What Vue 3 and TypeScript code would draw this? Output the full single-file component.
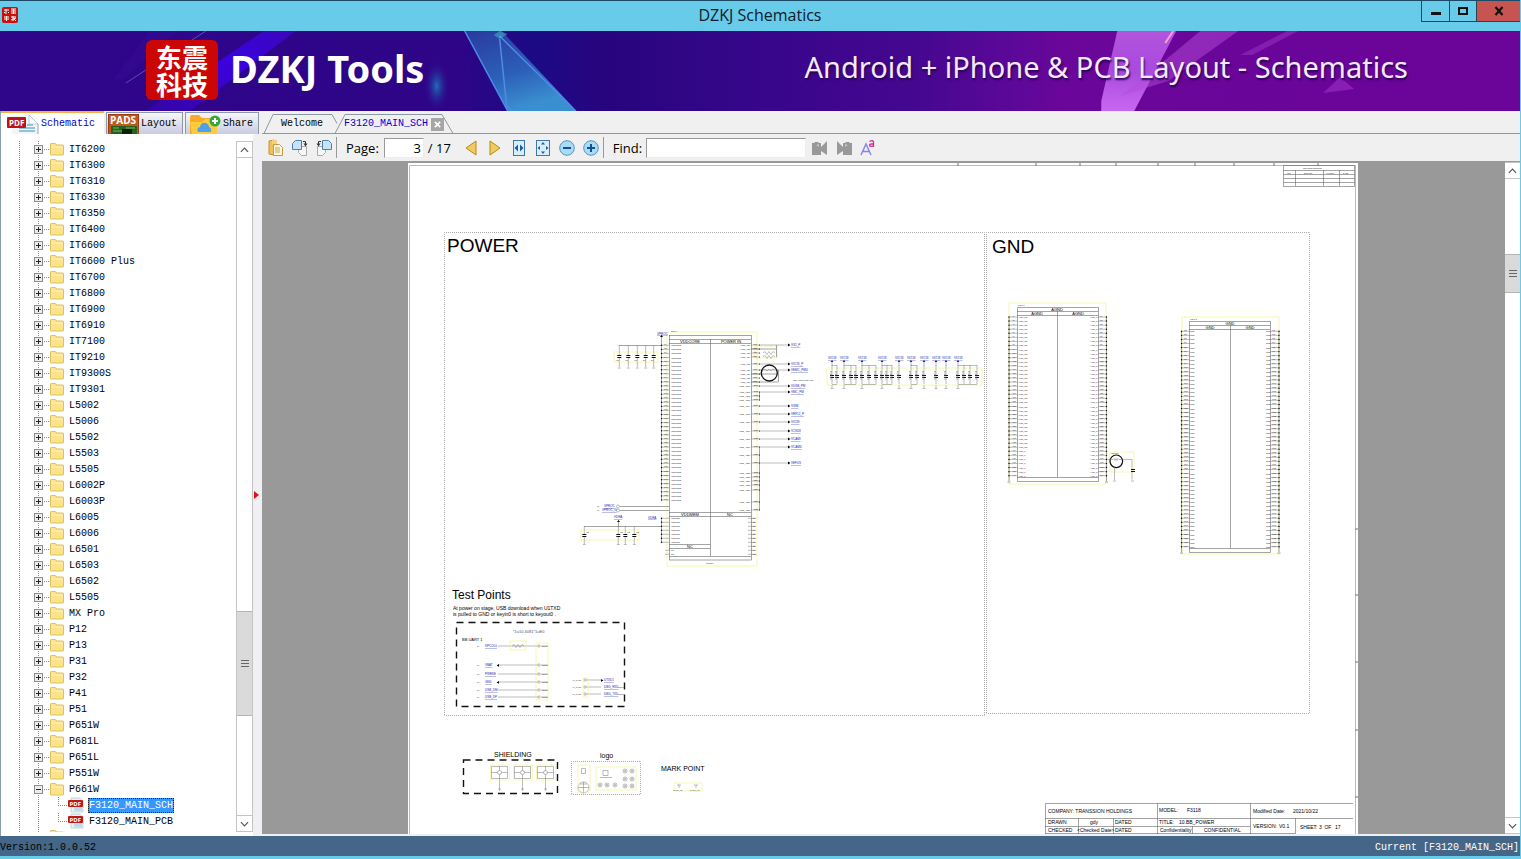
<script setup lang="ts">
import { ref } from 'vue'

interface Pin { y: number; n: string }
interface Line { x1: number; y1: number; x2: number; y2: number }

const folders: string[] = [
  'IT6200', 'IT6300', 'IT6310', 'IT6330', 'IT6350', 'IT6400', 'IT6600', 'IT6600 Plus', 'IT6700',
  'IT6800', 'IT6900', 'IT6910', 'IT7100', 'IT9210', 'IT9300S', 'IT9301', 'L5002', 'L5006', 'L5502',
  'L5503', 'L5505', 'L6002P', 'L6003P', 'L6005', 'L6006', 'L6501', 'L6503', 'L6502', 'L5505',
  'MX Pro', 'P12', 'P13', 'P31', 'P32', 'P41', 'P51', 'P651W', 'P681L', 'P651L', 'P551W', 'P661W',
]
const files: string[] = ['F3120_MAIN_SCH', 'F3120_MAIN_PCB']
const selected = ref('F3120_MAIN_SCH')
const page = ref('3')
const query = ref('')

const series = (from: number, to: number, count: number): number[] =>
  Array.from({ length: count }, (_, i) => from + ((to - from) * i) / (count - 1))
const named = (ys: number[], prefix: string): Pin[] => ys.map((y, i) => ({ y, n: prefix + (i + 1) }))

const corePins = named(series(345.3, 500, 39), 'K')
const memPins = named(series(518.3, 542.3, 7), 'M')
const powerPins = named(
  [345, 349, 353, 357, 364, 370, 374, 378, 382, 386, 392, 396, 400, 406, 414, 422, 431, 439, 447, 455,
    463, 473, 477, 481, 485, 490, 502, 510], 'AB')
const ncPins = named(series(518.3, 554.3, 10), 'U')
const outputs: Pin[] = [
  { y: 345, n: 'VS2_P' }, { y: 364, n: 'VIO18_P' }, { y: 370, n: 'VEMC_PMU' }, { y: 386, n: 'VUSB_PM' },
  { y: 392, n: 'VMC_PM' }, { y: 406, n: 'VSIM' }, { y: 414, n: 'VRF12_P' }, { y: 422, n: 'VIO28' },
  { y: 431, n: 'VCN18' }, { y: 439, n: 'VCAMI' }, { y: 447, n: 'VCAMD' }, { y: 463, n: 'VEFUS' },
]
const buses: Line[] = [
  { x1: 661.5, y1: 335, x2: 661.5, y2: 500 }, { x1: 661.5, y1: 518, x2: 661.5, y2: 543 },
  { x1: 619, y1: 345.5, x2: 662, y2: 345.5 }, { x1: 584, y1: 526.5, x2: 662, y2: 526.5 },
  { x1: 620, y1: 506.5, x2: 669, y2: 506.5 }, { x1: 620, y1: 510.5, x2: 669, y2: 510.5 },
  { x1: 759.5, y1: 447, x2: 759.5, y2: 510 }, { x1: 759.5, y1: 392, x2: 759.5, y2: 400 },
  { x1: 776.5, y1: 345, x2: 776.5, y2: 357 }, { x1: 778.5, y1: 370, x2: 778.5, y2: 382 },
  { x1: 751, y1: 349, x2: 776, y2: 349 }, { x1: 751, y1: 382, x2: 778, y2: 382 },
  { x1: 751, y1: 374, x2: 778, y2: 374 }, { x1: 618.5, y1: 521, x2: 618.5, y2: 527 },
]
const capsTop = [619.3, 628.3, 637.3, 645.7, 653.7]
const capsLow = [584.3, 618.3, 625.3, 634.3]
const bankLabels = [832, 844, 862, 882, 899, 911, 924, 936, 946, 958]
const bankCaps = [832, 837, 844, 851, 856, 862, 869, 876, 882, 887, 892, 899, 911, 917, 924, 936, 946, 958, 964, 970, 977]
const bankRails: [number, number][] = [[832, 837], [844, 856], [862, 876], [882, 892], [911, 917], [958, 977]]
const agnd = series(317, 475.7, 40)
const gnd = series(331.3, 546.7, 54)
const topTicks = [958, 1036, 1080, 1116, 1158, 1195, 1234, 1274, 1318]
const sideTicks = [529, 595, 662, 730, 797]
const leftNets: Pin[] = [
  { y: 646, n: 'KPCOL0' }, { y: 665, n: 'VBAT' }, { y: 674, n: 'PWRKE' },
  { y: 682, n: 'GND' }, { y: 690, n: 'USB_DM' }, { y: 697, n: 'USB_DP' },
]
const rightNets: Pin[] = [{ y: 680, n: 'UTXD1' }, { y: 687, n: 'DBG_RXD' }, { y: 694, n: 'DBG_TXD' }]
const shields = [499.5, 522.5, 545.5]
const dots: [number, number][] = [
  [600, 785], [607, 785], [615, 785], [625, 771], [632, 771], [625, 779], [632, 779], [625, 786], [632, 786],
]
</script>

<template>
  <div class="window">
    <header class="titlebar">
      <svg class="app-icon" viewBox="0 0 16 16" aria-hidden="true">
        <rect width="16" height="16" rx="2" fill="#c8100c" />
        <path d="M2 3h5M4 2v5M2 6l1-1M6 5l1 1M9 2h5M9 4h5M9 6h5M11.500 2v5M2 10h5M4.500 9v5M2 12h5M9 10h5M11 9v5M9 13l5-2M12 12l2 2" stroke="#fff" stroke-width="1" fill="none" />
      </svg>
      <h1>DZKJ Schematics</h1>
      <div class="win-buttons">
        <button class="wb min" aria-label="Minimize"><i></i></button>
        <button class="wb max" aria-label="Maximize"><i></i></button>
        <button class="wb close" aria-label="Close">
          <svg viewBox="0 0 10 10" width="10" height="10"><path d="M1.500 1l7 8M8.500 1l-7 8" stroke="#111" stroke-width="2.200" /></svg>
        </button>
      </div>
    </header>

    <section class="banner">
      <svg class="banner-art" viewBox="0 0 1521 80" preserveAspectRatio="none" aria-hidden="true">
        <defs>
          <linearGradient id="sky" x1="0" x2="1">
            <stop offset="0" stop-color="#2f058a" /><stop offset=".3" stop-color="#2e0587" />
            <stop offset=".35" stop-color="#1c0a85" /><stop offset=".4" stop-color="#28057f" />
            <stop offset=".5" stop-color="#37068a" /><stop offset=".6" stop-color="#45078f" />
            <stop offset=".67" stop-color="#5d0899" /><stop offset=".7" stop-color="#6a0699" />
            <stop offset="1" stop-color="#6b0499" />
          </linearGradient>
          <linearGradient id="beam" x1="1" y1="0" x2="0" y2="1">
            <stop offset="0" stop-color="#3d06b8" /><stop offset=".4" stop-color="#3a02e0" /><stop offset="1" stop-color="#3405a0" />
          </linearGradient>
          <linearGradient id="crystal" x1="0" y1="0" x2=".4" y2="1">
            <stop offset="0" stop-color="#2a3aa0" /><stop offset=".6" stop-color="#2c5fb8" /><stop offset="1" stop-color="#3a8fd0" />
          </linearGradient>
          <linearGradient id="pink" x1="0" y1="0" x2="0" y2="1">
            <stop offset="0" stop-color="#b354dc" /><stop offset=".5" stop-color="#a94ae0" /><stop offset="1" stop-color="#c868f0" />
          </linearGradient>
          <radialGradient id="glow"><stop offset="0" stop-color="#1c6fb8" /><stop offset="1" stop-color="#2f058a" stop-opacity="0" /></radialGradient>
        </defs>
        <rect width="1521" height="80" fill="url(#sky)" />
        <path d="M264 0h32L190 80h-45z" fill="url(#beam)" />
        <path d="M150 0h28L124 48h-10z" fill="#3a16a0" opacity=".25" />
        <path d="M206 0l-80 52" stroke="#5450b8" stroke-width="1" />
        <path d="M465 0h37l75 80H508z" fill="url(#crystal)" />
        <path d="M465 0l43 80h-30z" fill="#280a86" opacity=".35" />
        <path d="M465 0l43 80M500 5l76 75M500 8l7 67 6 5" stroke="#4f8be8" stroke-width="1.500" fill="none" />
        <path d="M500 0l-6 4 6 4 8-5z" fill="#4ce0d8" opacity=".4" />
        <ellipse cx="437" cy="55" rx="13" ry="26" fill="url(#glow)" />
        <path d="M1118 0h59l-42 80h-33V70z" fill="url(#pink)" />
        <path d="M1201 0h38l-70 50-48 15 50-40z" fill="#b34bd8" opacity=".5" />
        <path d="M1288 0h11l-46 24h-12z" fill="#b34bd8" opacity=".35" />
        <path d="M1341 46l14 12-31 4z" fill="#a035c8" opacity=".55" />
        <path d="M1174 0l-8 12" stroke="#ff9cd8" stroke-width="2" />
      </svg>
      <div class="seal">东震<br />科技</div>
      <strong>DZKJ Tools</strong>
      <p>Android + iPhone &amp; PCB Layout - Schematics</p>
    </section>

    <main>
      <aside>
        <nav class="side-tabs">
          <button class="tab active">
            <svg width="32" height="20" viewBox="0 0 32 20" aria-hidden="true">
              <path d="M5 1h18l8 9v10H5z" fill="#f2f6fa" /><path d="M22 1l9 9v10" stroke="#8fa6b8" fill="none" />
              <path d="M22 1v9h9z" fill="#fff" stroke="#a9bac8" stroke-width=".700" />
              <path d="M12 14h16M12 17h16M20 11h6" stroke="#93c4dc" stroke-width="2" />
              <rect y="3" width="19" height="11" rx="1" fill="#c01414" />
              <text x="2" y="12" class="pdf-mark" font-size="8">PDF</text>
            </svg>
            Schematic
          </button>
          <button class="tab layout">
            <svg width="31" height="20" viewBox="0 0 31 20" aria-hidden="true">
              <rect x=".500" y=".500" width="30" height="20" fill="#c4581c" stroke="#a03c10" />
              <rect x="3" y="12" width="26" height="8" fill="#275f1e" />
              <path d="M5 14h6M5 17h10M18 14h9" stroke="#6fc24a" /><rect x="14" y="15" width="10" height="5" fill="#111c10" />
              <text x="2" y="10" class="pdf-mark" font-size="10">PADS</text>
            </svg>
            Layout
          </button>
          <button class="tab share">
            <svg width="32" height="20" viewBox="0 0 32 20" aria-hidden="true">
              <path d="M1 3q0-2 2-2h7l3 3h13q2 0 2 2v14H1z" fill="#f7a928" /><path d="M1 8h12l3-3h12v15H3z" fill="#ffcb3d" />
              <path d="M9 18q-2-4 2-5 1-5 6-4 3 1 3 4 3 1 2 5z" fill="#4aa3e8" />
              <circle cx="26" cy="7" r="5.500" fill="#35a83c" /><path d="M26 4v6M23 7h6" stroke="#fff" stroke-width="2" />
            </svg>
            Share
          </button>
        </nav>
        <div class="tree-panel">
          <ul class="tree">
            <li v-for="(name, i) in folders" :key="i">
              <button class="node">
                <svg width="31" height="16" viewBox="0 0 31 16" aria-hidden="true">
                  <path d="M10 8.500h6" stroke="#888" stroke-dasharray="1 1" />
                  <rect x=".500" y="4.500" width="8" height="8" fill="#ececec" stroke="#8c8c8c" />
                  <path d="M2 8.500h5" stroke="#222" /><path v-if="i < folders.length - 1" d="M4.500 6v5" stroke="#222" />
                  <path d="M16.500 3q0-.500.500-.500h4l2 1.500h6q.500 0 .500.500v9q0 .500-.500.500h-12q-.500 0-.500-.500z" fill="#fbe58a" stroke="#e3bf62" />
                  <path d="M18 6h11" stroke="#fff3b4" />
                </svg>
                <b>{{ name }}</b>
              </button>
            </li>
            <li v-for="file in files" :key="file" class="leaf">
              <button class="node" :class="{ chosen: file === selected }" @click="selected = file">
                <svg width="26" height="16" viewBox="0 0 26 16" aria-hidden="true">
                  <path d="M0 8.500h10M.500 0v8" stroke="#888" stroke-dasharray="1 1" fill="none" />
                  <path d="M13 1h9l3 3v11H13z" fill="#eaf3f8" stroke="#a9c3d0" stroke-width=".700" />
                  <path d="M16 11h8M16 13h8" stroke="#8fc4de" />
                  <rect x="10" y="3" width="15" height="7" rx="1" fill="#c01818" /><text x="11.500" y="9" class="pdf-mark" font-size="6">PDF</text>
                </svg>
                <span>{{ file }}</span>
              </button>
            </li>
            <li>
              <svg width="31" height="16" viewBox="0 0 31 16" aria-hidden="true">
                <path d="M16.500 2q0-.500.500-.500h4l2 1.500h6q.500 0 .500.500v9H16.500z" fill="#fbe58a" stroke="#e3bf62" />
              </svg>
            </li>
          </ul>
          <div class="scrollbar">
            <button aria-label="Scroll tree up"><svg viewBox="0 0 10 6" width="9" height="6"><path d="M1 5l4-4 4 4" /></svg></button>
            <i class="tree-before"></i><i class="thumb tree-thumb"></i><i class="tree-after"></i>
            <button aria-label="Scroll tree down"><svg viewBox="0 0 10 6" width="9" height="6"><path d="M1 1l4 4 4-4" /></svg></button>
          </div>
        </div>
      </aside>

      <div class="splitter"><svg width="5" height="8" viewBox="0 0 5 8"><path d="M0 0l5 4-5 4z" fill="#e01010" /></svg></div>

      <section class="workspace">
        <nav class="doc-tabs">
          <svg class="tab-lines" width="200" height="23" viewBox="0 0 200 23" aria-hidden="true">
            <path d="M0 22.500h2L11 3.500h59l5 9M73 22.500l10-19h97l11 19" fill="none" stroke="#8b98a5" />
          </svg>
          <button>Welcome</button>
          <button class="current">F3120_MAIN_SCH</button>
          <button class="tab-close" aria-label="Close tab"><svg viewBox="0 0 8 8" width="7" height="7"><path d="M1 1l6 6M7 1l-6 6" stroke="#fff" stroke-width="2" /></svg></button>
        </nav>

        <div class="toolbar">
          <button class="tool" aria-label="Open">
            <svg width="16" height="18" viewBox="0 0 16 18"><path d="M1 2l5-1v15l-5-1z" fill="#f0c060" stroke="#c89030" /><path d="M4 1h5v4H4z" fill="#f5d080" /><path d="M5.500 5.500h6l3 3v8h-9z" fill="#fff8e0" stroke="#c79c45" /><path d="M7 9h5M7 11h5M7 13h5" stroke="#cda14c" /></svg>
          </button>
          <button class="tool" aria-label="Rotate right">
            <svg width="18" height="18" viewBox="0 0 18 18"><path d="M8.500 7.500h7v9h-5l-3-3v-3" fill="#f6f6f6" stroke="#aaa" /><path d="M1.500 4.500l3-3h6v9h-9z" fill="#c8e2f8" stroke="#4f80b0" /><path d="M12 2.500h2.500v3" fill="none" stroke="#333" /><path d="M12.500 4.500h4l-2 3z" fill="#333" /></svg>
          </button>
          <button class="tool" aria-label="Rotate left">
            <svg width="18" height="18" viewBox="0 0 18 18"><path d="M9.500 7.500h-7v9h5l3-3v-3" fill="#f6f6f6" stroke="#aaa" /><path d="M7.500 1.500h6l3 3v6h-9z" fill="#c8e2f8" stroke="#4f80b0" /><path d="M6 2.500H3.500v3" fill="none" stroke="#333" /><path d="M1.500 4.500h4l-2 3z" fill="#333" /></svg>
          </button>
          <i class="rule"></i>
          <label for="page">Page:</label>
          <input id="page" v-model="page" class="page-box" type="text" />
          <span class="total">/ 17</span>
          <button class="tool" aria-label="Previous page"><svg width="14" height="16" viewBox="0 0 14 16"><path d="M12 1v14L2 8z" fill="#f0cc60" stroke="#b88718" stroke-linejoin="round" /></svg></button>
          <button class="tool" aria-label="Next page"><svg width="14" height="16" viewBox="0 0 14 16"><path d="M2 1v14l10-7z" fill="#f0cc60" stroke="#b88718" stroke-linejoin="round" /></svg></button>
          <button class="tool" aria-label="Fit width"><svg width="14" height="16" viewBox="0 0 14 16"><rect x="1.500" y=".500" width="11" height="15" fill="#d9edfb" stroke="#3d77b5" /><path d="M6 4.500v7L2.500 8zM8 4.500v7L11.500 8z" fill="#1d5ca8" /></svg></button>
          <button class="tool" aria-label="Fit page"><svg width="14" height="16" viewBox="0 0 14 16"><rect x=".500" y=".500" width="13" height="15" fill="#d9edfb" stroke="#3d77b5" /><path d="M5 4.500L7 2l2 2.500zM5 11.500L7 14l2-2.500zM4 6v4L1.500 8zM10 6v4l2.500-2z" fill="#1d5ca8" /></svg></button>
          <button class="tool" aria-label="Zoom out"><svg width="16" height="16" viewBox="0 0 16 16"><circle cx="8" cy="8" r="7.300" fill="#a6dcf7" stroke="#5d91bb" /><path d="M4 8h8" stroke="#14508c" stroke-width="2" /></svg></button>
          <button class="tool" aria-label="Zoom in"><svg width="16" height="16" viewBox="0 0 16 16"><circle cx="8" cy="8" r="7.300" fill="#a6dcf7" stroke="#5d91bb" /><path d="M4 8h8M8 4v8" stroke="#14508c" stroke-width="2" /></svg></button>
          <i class="rule"></i>
          <label for="find">Find:</label>
          <input id="find" v-model="query" class="find-box" type="text" />
          <button class="tool" aria-label="Find previous"><svg width="16" height="16" viewBox="0 0 16 16"><path d="M0 3h2l1-1h3l1 1h2v4l6-6v14l-6-4v4H0z" fill="#999" /><path d="M4 5l3-1v3z" fill="#c4c4c4" /></svg></button>
          <button class="tool" aria-label="Find next"><svg width="16" height="16" viewBox="0 0 16 16"><path d="M16 3h-2l-1-1h-3L9 3H7v4L1 1v14l6-4v4h9z" fill="#999" /><path d="M12 5L9 4v3z" fill="#c4c4c4" /></svg></button>
          <button class="tool" aria-label="Match case"><svg width="16" height="18" viewBox="0 0 16 18"><path d="M1 16L6 5l5 11M3 12.500h6" fill="none" stroke="#8a84e6" stroke-width="1.500" /><path d="M9.500 2.500q4-2 4 1V8M13.500 5h-2q-2 0-2 1.200t2 1.200 2-1.400" fill="none" stroke="#cf2f94" stroke-width="1.300" /></svg></button>
        </div>

        <div class="viewer">
          <div class="canvas">
            <svg class="sheet" viewBox="408 163 950 671" width="950" height="671" role="img" aria-label="Schematic page 3">
              <rect x="408" y="163" width="950" height="671" fill="#fff" />
              <path d="M409.500 834V165.500H1355.500V834" fill="none" stroke="#bbb" stroke-width="1" />
              <path v-for="x in topTicks" :key="x" :d="`M${x} 163v3`" stroke="#777" />
              <path v-for="y in sideTicks" :key="y" :d="`M1355 ${y}h3`" stroke="#777" />

              <!-- revision table -->
              <g class="thin">
                <path d="M1283.500 165.500h71v21h-71zM1283.500 170.500h71M1283.500 174.500h71M1283.500 178.500h71M1283.500 182.500h71M1295.500 170v16M1323.500 170v16M1339.500 170v16" />
              </g>
              <g class="micro"><text x="1303" y="169">REVISION RECORD</text><text x="1287" y="173.500">LTR</text><text x="1304" y="173.500">ECO NO:</text><text x="1326" y="173.500">APPROV</text><text x="1343" y="173.500">DATE:</text></g>

              <!-- frames -->
              <g fill="none" stroke="#aaa" stroke-width="1" stroke-dasharray="1 1" stroke-dashoffset=".500">
                <path d="M444.500 232.500h540M444.500 715.500h540M986.500 232.500h323M986.500 713.500h323M571.500 761.500h69M571.500 794.500h69" />
                <path d="M444.500 232.500v483M984.500 232.500v483M986.500 232.500v481M1309.500 232.500v481M571.500 761.500v33M640.500 761.500v33" />
              </g>
              <g fill="none" stroke="#111" stroke-width="1.400" stroke-dasharray="7 5">
                <rect x="456.500" y="622.500" width="168" height="84" /><rect x="463.500" y="760" width="94" height="33.500" />
              </g>
              <text x="447" y="252" class="heading">POWER</text>
              <text x="992" y="253" class="heading">GND</text>
              <text x="452" y="599" font-size="12">Test Points</text>
              <text x="453" y="610" class="note">At power on stage, USB download when U1TXD</text>
              <text x="453" y="616" class="note">is pulled to GND or keyin0 is short to keyout0 .</text>
              <text x="494" y="757" font-size="7">SHIELDING</text>
              <text x="600" y="758" font-size="7">logo</text>
              <text x="661" y="771" font-size="7">MARK POINT</text>

              <!-- highlighted component bounds -->
              <g class="bounds">
                <rect x="667" y="332" width="90" height="234" /><rect x="614" y="352" width="44" height="10" />
                <rect x="581" y="530" width="58" height="10" /><rect x="827" y="368" width="155" height="17" />
                <rect x="1009" y="303" width="97" height="181" /><rect x="1182" y="317" width="97" height="237" />
                <rect x="755" y="346" width="22" height="12" /><rect x="1110" y="452" width="24" height="20" />
              </g>

              <!-- main chip -->
              <g class="thin">
                <rect x="669.500" y="335.500" width="82" height="224.500" />
                <path d="M669 339.500h82M669 343.500h82M710.500 339v217M669 512.500h82M669 516.500h82M669 544.500h41M669 548.500h41M669 556.500h82" />
                <path v-for="(b, i) in buses" :key="i" :d="`M${b.x1} ${b.y1}L${b.x2} ${b.y2}`" />
              </g>
              <g v-for="p in corePins" :key="p.n"><path :d="`M661.5 ${p.y}h8`" class="wire" /><circle cx="661.500" :cy="p.y" r=".700" /><text x="671" :y="p.y + 1" class="micro">VDDCORE</text><text x="664" :y="p.y" class="micro">{{ p.n }}</text></g>
              <g v-for="p in memPins" :key="p.n"><path :d="`M661.5 ${p.y}h8`" class="wire" /><circle cx="661.500" :cy="p.y" r=".700" /><text x="671" :y="p.y + 1" class="micro">VDDMEM</text></g>
              <g v-for="p in powerPins" :key="p.n"><path :d="`M751.5 ${p.y}h8`" class="wire" /><circle cx="759.500" :cy="p.y" r=".500" /><text x="750" :y="p.y + 1" class="micro end">AVDD_{{ p.n }}</text><text x="753" :y="p.y" class="micro">{{ p.n }}</text></g>
              <g v-for="p in ncPins" :key="p.n"><path :d="`M748 ${p.y}h8`" class="wire" /><text x="752.500" :y="p.y + 1" class="micro">{{ p.n }}</text></g>
              <g v-for="y in [550.3, 554.3]" :key="y"><path :d="`M665 ${y}h5`" class="wire" /><text x="671" :y="y + 1" class="micro">NC</text></g>
              <g v-for="p in outputs" :key="p.n"><path :d="`M759 ${p.y}h29`" class="wire" /><path :d="`M788 ${p.y - 1.4}l2.400 1.400-2.400 1.400z`" /><text x="791" :y="p.y + 1" class="net">{{ p.n }}</text></g>
              <g class="label"><text x="690" y="343">VDDCORE</text><text x="731" y="343">POWER IN</text><text x="690" y="515.500">VDDMEM</text><text x="730" y="515.500">NC</text><text x="690" y="548">NC</text></g>
              <path d="M763 353l2-1.500 2 3 2-3 2 3 2-3 2 1.500M763 357l2-1.500 2 3 2-3 2 3 2-3 2 1.500" class="wire" />
              <circle cx="769.300" cy="373" r="8" fill="none" stroke="#111" stroke-width="1.300" />
              <path d="M763 370l2-1 2 2 2-2 2 2 2-2 2 1" class="wire" />
              <g class="net"><text x="657" y="334.500">VPROC</text><text x="604" y="507">VPROC</text><text x="602" y="511">VPROC_G</text><text x="614" y="518">VDRA</text><text x="648" y="518.500">VDRA</text></g>
              <path d="M660 337l1.500-2 1.500 2zM617 522l1.500-2 1.500 2z" />
              <g class="micro"><text x="671" y="332">U101-A</text><text x="706" y="564">MT6739</text><text x="597" y="507">[3]</text><text x="597" y="511">[3]</text><text x="793" y="381">Note: close to BGA ball</text></g>
              <circle cx="618" cy="506.500" r="1.500" class="wire" /><circle cx="618" cy="510.500" r="1.500" class="wire" />

              <!-- decoupling capacitors -->
              <g v-for="x in capsTop" :key="x"><path :d="`M${x} 345v10M${x} 358v9M${x - 1.5} 368h3`" class="wire" /><path :d="`M${x - 2} 355.500h4M${x - 2} 357.500h4`" class="plate" /><text :x="x - 3" y="361" class="micro">C1</text></g>
              <g v-for="x in capsLow" :key="x"><path :d="`M${x} 526v8M${x} 537v7M${x - 1.5} 544.500h3`" class="wire" /><path :d="`M${x - 2} 534.500h4M${x - 2} 536.500h4`" class="plate" /><text :x="x + 2" y="533" class="micro">C2</text></g>
              <g v-for="x in bankLabels" :key="x"><text :x="x - 4" y="359" class="net">VIO18</text><path :d="`M${x - 1.3} 362l1.300-2 1.300 2z`" /><path :d="`M${x} 361v5M${x} 385v3M${x - 1.5} 388.500h3`" class="wire" /></g>
              <path v-for="r in bankRails" :key="r[0]" :d="`M${r[0]} 365.500H${r[1]}M${r[0]} 384.500H${r[1]}`" class="wire" />
              <g v-for="x in bankCaps" :key="x"><path :d="`M${x} 365v19`" class="wire" /><path :d="`M${x - 2} 375.500h4M${x - 2} 377.500h4`" class="plate" /><path :d="`M${x - 1} 371v9`" stroke="#777" stroke-dasharray="1 .500" /></g>

              <!-- ground blocks -->
              <g class="thin">
                <path d="M1017.500 307.500h81v174h-81zM1017 311.500h81M1017 315.500h81M1057.500 311v166M1017 477.500h81M1009 317v164M1106.500 317v164" />
                <path d="M1189.500 321.500h81v231h-81zM1189 325.500h81M1189 329.500h81M1230.500 325v223M1189 548.500h81M1181.500 331v221M1279 331v221" />
                <path d="M1007.500 482h3M1105 482h3M1180 553h3M1277.500 553h3" />
              </g>
              <g v-for="(y, i) in agnd" :key="y">
                <path :d="`M1009 ${y}h8.500M1098 ${y}h8.500`" class="wire" /><circle cx="1009" :cy="y" r=".700" /><circle cx="1106.500" :cy="y" r=".700" />
                <text x="1018" :y="y + 1" class="micro">{{ i < 33 ? 'AVSS_MD' : 'AVSS_P' }}</text><text x="1097.500" :y="y + 1" class="micro end">AVSS_R</text>
                <text x="1012" :y="y" class="micro">A{{ i + 1 }}</text><text x="1100" :y="y" class="micro">T{{ i + 1 }}</text>
              </g>
              <g v-for="(y, i) in gnd" :key="y">
                <path :d="`M1181.5 ${y}h8M1271 ${y}h8`" class="wire" /><circle cx="1181.500" :cy="y" r=".700" /><circle cx="1279" :cy="y" r=".700" />
                <text x="1190" :y="y + 1" class="micro">GND</text><text x="1270.500" :y="y + 1" class="micro end">GND</text>
                <text x="1184" :y="y" class="micro">G{{ i + 1 }}</text><text x="1272" :y="y" class="micro">W{{ i + 1 }}</text>
              </g>
              <g class="label"><text x="1057" y="310.500">AGND</text><text x="1037" y="315">AGND</text><text x="1078" y="315">AGND</text><text x="1230" y="325">GND</text><text x="1210" y="329">GND</text><text x="1250" y="329">GND</text></g>
              <g class="micro"><text x="1018" y="305.500">U101-F</text><text x="1190" y="320">U101-G</text><text x="1111" y="454">Thermal</text></g>
              <circle cx="1116.300" cy="461.300" r="6.300" fill="none" stroke="#111" stroke-width="1.200" />
              <path d="M1107 459.500h6l1-1 1 2 1-2 1 2 1-2 1 1h13v20M1131 481h3M1114.500 466v14M1113 481h3" class="wire" />
              <path d="M1131 469.500h4M1131 471.500h4" class="plate" />

              <!-- test points -->
              <text x="462" y="641" font-size="4">BB UART 1</text>
              <text x="513" y="633" font-size="4" fill="#555">*1u10 4081*1uE0</text>
              <g v-for="p in leftNets" :key="p.n"><text x="485" :y="p.y + 1" class="net">{{ p.n }}</text><path :d="`M498 ${p.y}h40M541 ${p.y}h7`" class="wire" /><circle cx="539" :cy="p.y" r="1.200" class="wire" /><text x="542" :y="p.y + 1" class="micro">TP{{ p.y }}</text><text x="477" :y="p.y + 1" class="micro">[5]</text></g>
              <path d="M499 664l-2.400 1.400 2.400 1.400zM499 681l-2.400 1.400 2.400 1.400z" />
              <path d="M512 646l2-1.500 2 3 2-3 2 3 2-3 2 1.500" class="wire" />
              <g v-for="p in rightNets" :key="p.n"><text x="572" :y="p.y + 1" class="micro">AP_UART</text><circle cx="585" :cy="p.y" r="1.200" class="wire" /><path :d="`M586 ${p.y}h15`" class="wire" /><text x="604" :y="p.y + 1" class="net">{{ p.n }}</text></g>
              <path d="M601 679l2.400 1.400-2.400 1.400z" /><path d="M618 687.500h6M618 694.500h6" class="wire" />
              <g class="bounds"><rect x="510" y="641" width="16" height="9" /><rect x="536" y="643" width="12" height="57" /><rect x="583" y="678" width="5" height="19" /></g>

              <!-- shielding, logo, marks -->
              <g v-for="x in shields" :key="x" class="wire">
                <path :d="`M${x - 8} 766.500h16v12h-16zM${x - 8} 772.500h16M${x} 766v25M${x - 1.5} 789h3`" /><circle :cx="x" cy="772.500" r="2" fill="#fff" />
                <rect :x="x - 9" y="765" width="19" height="15" class="yellow" />
              </g>
              <g class="wire">
                <path d="M581.500 768.500h4v5h-4zM603 770.500h5v5h-5zM600 777.500h12" /><circle cx="583.500" cy="787.500" r="5.500" /><path d="M578 787.500h11M583.500 782v11M580 784h7" />
                <circle v-for="(d, i) in dots" :key="i" :cx="d[0]" :cy="d[1]" r="2" /><circle v-for="(d, i) in dots" :key="'c' + i" :cx="d[0]" :cy="d[1]" r=".700" />
                <path d="M677 785h4M679 785v3M694 785h4M696 785v3" />
              </g>
              <g class="bounds"><rect x="578" y="765" width="12" height="27" /><rect x="596" y="767" width="40" height="23" /><rect x="674" y="783" width="28" height="8" /></g>
              <g class="micro"><text x="673" y="790.500">MARK_PT</text><text x="690" y="790.500">MARK_PT</text></g>

              <!-- title block -->
              <path class="thin" d="M1353 803.500H1045.500V834M1045 818.500h308M1045 826.500h205M1045 833.500h250M1157.500 803v31M1250.500 803v31M1295.500 818v16M1078.500 818v16M1113.500 818v16M1192.500 826v8" />
              <g font-size="5">
                <text x="1048" y="813">COMPANY: TRANSSION HOLDINGS</text><text x="1159" y="812">MODEL:</text><text x="1187" y="812">F3118</text>
                <text x="1253" y="813">Modified Date:</text><text x="1293" y="813">2021/10/22</text>
                <text x="1048" y="824">DRAWN</text><text x="1090" y="824">gdy</text><text x="1115" y="824">DATED</text><text x="1159" y="824">TITLE:</text><text x="1179" y="824">10.BB_POWER</text>
                <text x="1048" y="832">CHECKED</text><text x="1077" y="832">&lt;Checked Date&gt;</text><text x="1115" y="832">DATED</text><text x="1160" y="832">Confidentiality</text><text x="1204" y="832">CONFIDENTIAL</text>
                <text x="1253" y="828">VERSION:</text><text x="1279" y="828">V0.1</text><text x="1300" y="829">SHEET: 3&nbsp; OF</text><text x="1335" y="829">17</text>
              </g>
            </svg>
          </div>
          <div class="scrollbar">
            <button aria-label="Scroll page up"><svg viewBox="0 0 10 6" width="9" height="6"><path d="M1 5l4-4 4 4" /></svg></button>
            <i class="page-before"></i><i class="thumb page-thumb"></i><i class="page-after"></i>
            <button aria-label="Scroll page down"><svg viewBox="0 0 10 6" width="9" height="6"><path d="M1 1l4 4 4-4" /></svg></button>
          </div>
        </div>
      </section>
    </main>

    <footer><span>Version:1.0.0.52</span><span class="status">Current [F3120_MAIN_SCH]</span></footer>
  </div>
</template>

<style>
body { margin: 0; }
</style>

<style scoped>
* { box-sizing: border-box; }
button { border: 0; padding: 0; margin: 0; background: none; font: inherit; color: inherit; }
svg { display: block; flex: none; }
.window {
  height: 100vh; display: flex; flex-direction: column; overflow: hidden; background: #f0f0f0;
  border-bottom: 3px solid #67cbe9; border-right: 1px solid #67cbe9;
  font: 10px/16px "Liberation Mono", monospace; color: #000;
}
.titlebar { display: grid; grid-template-columns: 1fr auto 1fr; height: 31px; flex: none; background: #67cbe9; border-top: 1px solid #1a4a66; }
.app-icon { width: 16px; height: 16px; margin: 6px 0 0 2px; }
h1 { margin: 0; font: 400 16px/28px "Open Sans", sans-serif; color: #10202c; }
.win-buttons { justify-self: end; display: flex; height: 21px; border: 1px solid #26464f; border-top: 0; border-right: 0; }
.wb { display: flex; align-items: center; justify-content: center; width: 27px; }
.wb + .wb { border-left: 1px solid #26464f; }
.wb i { display: block; }
.min i { width: 10px; height: 3px; margin-top: 5px; background: #111; }
.max i { width: 10px; height: 8px; border: 2px solid #111; }
.wb.close { width: 44px; background: #c75450; }

.banner { position: relative; display: flex; align-items: center; height: 80px; flex: none; padding: 0 112px 0 146px; color: #fff; }
.banner-art { position: absolute; inset: 0; width: 100%; height: 100%; }
.seal { position: relative; width: 72px; height: 60px; margin: 0 12px 2px 0; padding-top: 3px; border-radius: 6px; background: #cc0505; font: 700 26px/27px "Noto Sans CJK SC", sans-serif; text-align: center; }
.banner strong { position: relative; margin-bottom: 6px; font: 700 38px/48px "Noto Sans", sans-serif; }
.banner p { position: relative; margin: 0 0 8px auto; font: 400 29px/36px "Noto Sans", sans-serif; color: #f4eaff; text-shadow: 1px 2px 2px #2a0450; white-space: nowrap; }

main { flex: 1; min-height: 0; display: flex; }
aside { width: 253px; flex: none; display: flex; flex-direction: column; background: #fff; border-left: 1px solid #8aa0ae; }
.side-tabs { display: flex; gap: 2px; width: 260px; height: 23px; background: #f0f0f0; flex: none; }
.tab { display: flex; align-items: center; gap: 2px; height: 22px; margin-top: 1px; border: 1px solid #8b98a5; border-bottom: 0; background: linear-gradient(#f6f6fa, #c9cbe0); overflow: hidden; }
.tab.layout { padding: 1px 5px 0 1px; }
.tab.share { padding: 1px 5px 0 3px; }
.tab.active { height: 23px; margin-top: 0; padding: 0 9px 0 6px; border: 0; border-top: 2px solid #f8b040; background: #fff; color: #0000c8; }
.pdf-mark { font-family: "Open Sans", sans-serif; font-weight: 700; fill: #fff; }
.tree-panel { flex: 1; min-height: 0; display: flex; padding: 7px 0 4px; }
.tree {
  flex: 1; margin: 0; padding: 0 0 0 33px; list-style: none; overflow: hidden;
  background: repeating-linear-gradient(#888 0 1px, transparent 1px 2px) 18px 0 / 1px 100% no-repeat, repeating-linear-gradient(#888 0 1px, transparent 1px 2px) 37px 0 / 1px 100% no-repeat;
}
.node { display: flex; height: 16px; gap: 4px; align-items: center; text-align: left; white-space: nowrap; }
.node b { padding-top: 2px; font-weight: 400; }
.leaf { padding-left: 24px; }
.node span { padding: 0 1px; line-height: 15px; }
.chosen span { background: #3399ff; color: #fff; outline: 1px dotted #222; outline-offset: -1px; }
.scrollbar { display: flex; flex-direction: column; width: 17px; flex: none; background: #fff; border: 1px solid #c4c4c4; }
.scrollbar button { display: flex; height: 16px; flex: none; align-items: center; justify-content: center; border-bottom: 1px solid #c4c4c4; }
.scrollbar button:last-child { border-bottom: 0; border-top: 1px solid #c4c4c4; }
.scrollbar path { fill: none; stroke: #555; stroke-width: 1.3; }
.thumb { display: block; background: linear-gradient(#666, #666) center calc(50% - 3px) / 8px 1px no-repeat, linear-gradient(#666, #666) center / 8px 1px no-repeat, linear-gradient(#666, #666) center calc(50% + 3px) / 8px 1px no-repeat, #dadada; border: solid #b5b5b5; border-width: 1px 0; }
.tree-before { flex: 455; } .tree-thumb { flex: 104; } .tree-after { flex: 99; }
.page-before { flex: 76; } .page-thumb { flex: 37; } .page-after { flex: 529; }
.splitter { width: 9px; flex: none; display: flex; align-items: center; padding-left: 1px; margin-top: 23px; padding-top: 19px; background: #f0f0f4; }
.workspace { flex: 1; min-width: 0; display: flex; flex-direction: column; background: #f0f0f0; }
.doc-tabs { position: relative; display: flex; align-items: center; height: 23px; flex: none; padding: 4px 0 0 19px; border-bottom: 1px solid #8b98a5; line-height: 18px; }
.tab-lines { position: absolute; left: 0; top: 0; }
.doc-tabs button { position: relative; }
.doc-tabs .current { margin-left: 21px; color: #0000d8; }
.doc-tabs .tab-close { display: grid; place-items: center; width: 13px; height: 13px; margin-left: 3px; background: #a6a6a6; }
.toolbar { display: flex; align-items: center; height: 28px; flex: none; padding-left: 2px; border-bottom: 1px solid #999; font: 13px/20px "Open Sans", sans-serif; }
.tool { display: grid; place-items: center; width: 24px; height: 22px; }
.rule { width: 1px; height: 21px; margin: 0 9px 0 0; background: #999; }
.toolbar input { height: 20px; border: 1px solid #999; border-right-color: #eee; border-bottom-color: #eee; background: #fff; font: inherit; border-radius: 0; }
.page-box { width: 40px; margin: 0 4px 0 5px; padding: 0 2px; text-align: right; }
.total { margin-right: 8px; }
.find-box { width: 160px; margin: 0 2px 0 4px; }
.viewer { flex: 1; min-height: 0; display: flex; padding-bottom: 2px; }
.canvas { flex: 1; min-width: 0; display: flex; justify-content: center; padding: 1px 1px 0 0; overflow: hidden; background: #999; }
.viewer .scrollbar { width: 15px; border-width: 1px 0; }
.sheet { font-family: "Liberation Sans", sans-serif; }
.heading { font-size: 19px; }
.note { font-size: 5px; }
.label { font-size: 4px; text-anchor: middle; }
.micro { font-size: 2px; fill: #222; }
.end { text-anchor: end; }
.net { font-size: 3px; fill: #2222b4; text-decoration: underline; }
.thin { fill: none; stroke: #666; stroke-width: .6; }
.wire { fill: none; stroke: #777; stroke-width: .5; }
.plate { fill: none; stroke: #111; stroke-width: 1; }
.bounds { fill: none; stroke: #f2f27a; stroke-width: .6; }
.yellow { stroke: #f2f27a; }
footer { display: flex; justify-content: space-between; height: 20px; flex: none; padding: 4px 1px 0 0; background: #446688; overflow: hidden; }
.status { color: #fff; }
</style>
